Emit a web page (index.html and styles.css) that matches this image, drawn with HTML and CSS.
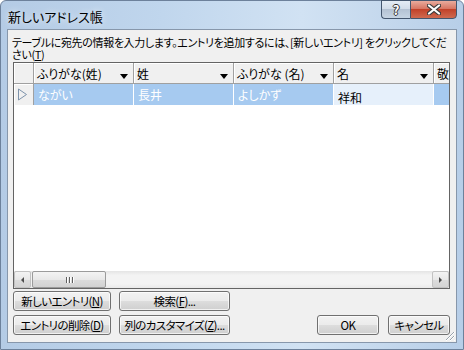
FILE: index.html
```html
<!DOCTYPE html>
<html lang="ja">
<head>
    <meta charset="UTF-8">
    <title>新しいアドレス帳</title>
    <link rel="stylesheet" href="styles.css">
</head>
<body>
    <div class="window">
        <!-- Title bar -->
        <div class="titlebar">
            <span class="title">新しいアドレス帳</span>
            <div class="caption-buttons">
                <div class="cap-btn help">?</div>
                <div class="cap-btn close">
                    <svg width="14" height="11" viewBox="0 0 14 11">
                        <path d="M2 1.5 L12 9.5 M12 1.5 L2 9.5" stroke="#3b3b3b" stroke-width="4.2" stroke-linecap="round"/>
                        <path d="M2 1.5 L12 9.5 M12 1.5 L2 9.5" stroke="#ffffff" stroke-width="2.2" stroke-linecap="round"/>
                    </svg>
                </div>
            </div>
        </div>

        <div class="client">
            <div class="prompt">
                <span>テーブルに宛先の情報を入力します。エントリを追加するには、[新しいエントリ] をクリックしてくだ</span>
                <span>さい(<u>T</u>)</span>
            </div>

            <!-- Address grid -->
            <div class="grid">
                <div class="grid-view">
                    <div class="grid-row grid-head">
                        <div class="row-head"></div>
                        <div class="col-head"><span>ふりがな(姓)</span><i class="drop"></i></div>
                        <div class="col-head"><span>姓</span><i class="drop"></i></div>
                        <div class="col-head"><span>ふりがな (名)</span><i class="drop"></i></div>
                        <div class="col-head"><span>名</span><i class="drop"></i></div>
                        <div class="col-head"><span>敬称</span><i class="drop"></i></div>
                    </div>
                    <div class="grid-row grid-data">
                        <div class="row-head">
                            <svg width="11" height="13" viewBox="0 0 11 13">
                                <path d="M1.5 1 L9.5 6.5 L1.5 12 Z" fill="none" stroke="#7d93ab" stroke-width="1"/>
                            </svg>
                        </div>
                        <div class="cell sel">ながい</div>
                        <div class="cell sel">長井</div>
                        <div class="cell sel">よしかず</div>
                        <div class="cell current">祥和</div>
                        <div class="cell sel"></div>
                    </div>
                </div>
                <div class="hscroll">
                    <div class="sb-btn"><i class="arrow-left"></i></div>
                    <div class="sb-thumb"><i></i><i></i><i></i></div>
                    <div class="sb-track"></div>
                    <div class="sb-btn"><i class="arrow-right"></i></div>
                </div>
            </div>

            <!-- Buttons -->
            <div class="actions">
                <div class="left-buttons">
                    <div class="btn">新しいエントリ(<u>N</u>)</div>
                    <div class="btn">検索(<u>F</u>)...</div>
                    <div class="btn">エントリの削除(<u>D</u>)</div>
                    <div class="btn">列のカスタマイズ(<u>Z</u>)...</div>
                </div>
                <div class="right-buttons">
                    <div class="btn">OK</div>
                    <div class="btn">キャンセル</div>
                </div>
            </div>

            <svg class="grip" width="12" height="12" viewBox="0 0 12 12">
                <path d="M11 2 L2 11 M11 6 L6 11 M11 10 L10 11" stroke="#ffffff" stroke-width="1"/>
                <path d="M10 2 L2 10 M10 6 L6 10" stroke="#9aa3ad" stroke-width="1"/>
            </svg>
        </div>
    </div>
</body>
</html>
```

FILE: styles.css
```css
* {
    margin: 0;
    padding: 0;
    box-sizing: border-box;
}

body {
    width: 464px;
    height: 350px;
    overflow: hidden;
    font-family: "Noto Sans CJK JP", sans-serif;
    font-size: 12px;
    font-feature-settings: "palt";
    color: #000;
    background: #fff;
}

u {
    text-decoration: underline;
    text-underline-offset: 1px;
}

.window {
    width: 464px;
    height: 350px;
    display: flex;
    flex-direction: column;
    border: 1px solid #6d819b;
    border-radius: 6px 6px 0 0;
    background: linear-gradient(to right, #b4cbe5 0%, #c0d6ed 35%, #d1e2f3 65%, #c7daee 80%, #b7cee8 100%);
}

/* Title bar */
.titlebar {
    height: 28px;
    display: flex;
    align-items: center;
    padding: 0 6px 0 7px;
}

.title {
    flex: 1;
    font-size: 13px;
    padding-top: 3px;
    text-shadow: 0 0 6px rgba(255, 255, 255, 0.9);
}

.caption-buttons {
    align-self: flex-start;
    margin-top: -1px;
    display: flex;
}

.cap-btn {
    height: 19px;
    display: flex;
    align-items: center;
    justify-content: center;
    border: 1px solid #44566e;
}

.help {
    width: 29px;
    border-right: none;
    border-radius: 0 0 0 4px;
    background: linear-gradient(#e4ecf5 0%, #d3dde9 45%, #b4c2d3 50%, #c6d4e3 100%);
    color: #fff;
    font-weight: bold;
    font-size: 13px;
    text-shadow: 1px 0 #333, -1px 0 #333, 0 1px #333, 0 -1px #333;
}

.close {
    width: 47px;
    border-radius: 0 0 4px 0;
    background: linear-gradient(#e9ab9d 0%, #d77663 45%, #c2422a 50%, #cf6a50 100%);
}

/* Client area */
.client {
    position: relative;
    flex: 1;
    margin: 0 6px 6px 6px;
    border: 1px solid #8797ab;
    background: #f0f0f0;
    display: flex;
    flex-direction: column;
    padding: 6px 6px 7px 5px;
}

.prompt {
    margin-left: -1px;
    font-size: 11px;
    letter-spacing: -0.35px;
    white-space: nowrap;
}

.prompt span {
    display: block;
    height: 12px;
    line-height: 12px;
}

/* Grid */
.grid {
    flex: 1;
    margin-top: 2px;
    border: 1px solid #646464;
    background: #fff;
    display: flex;
    flex-direction: column;
}

.grid-view {
    flex: 1;
    overflow: hidden;
}

.grid-row {
    display: flex;
    height: 21px;
    white-space: nowrap;
}

.grid-head {
    border-bottom: 1px solid #a0a0a0;
}

.row-head {
    flex: none;
    width: 20px;
    background: #f0f0f0;
    border-right: 1px solid #a0a0a0;
    box-shadow: inset 1px 1px 0 #fff;
    display: flex;
    align-items: center;
    padding-left: 3px;
}

.col-head {
    flex: none;
    width: 100px;
    display: flex;
    align-items: center;
    padding-left: 3px;
    background: #f0f0f0;
    border-right: 1px solid #a0a0a0;
    box-shadow: inset 1px 1px 0 #fff;
}

.col-head span {
    flex: 1;
}

.drop {
    width: 0;
    height: 0;
    margin: 6px 5px 0 0;
    border-left: 4.5px solid transparent;
    border-right: 4.5px solid transparent;
    border-top: 5px solid #000;
}

.cell {
    flex: none;
    width: 100px;
    padding-left: 4px;
    display: flex;
    align-items: center;
    border-right: 1px solid #fff;
}

.sel {
    background: #a6caf0;
    color: #fff;
}

.current {
    background: #e6f0fb;
    padding-top: 5px;
}

/* Horizontal scrollbar */
.hscroll {
    height: 17px;
    display: flex;
    background: linear-gradient(#e4e4e4, #f3f3f3 25%, #f3f3f3 75%, #e9e9e9);
}

.sb-btn {
    width: 17px;
    display: flex;
    align-items: center;
    justify-content: center;
    border: 1px solid #c2c2c2;
    border-radius: 2px;
    background: linear-gradient(#f3f3f3 0%, #e8e8e8 50%, #dcdcdc 51%, #d4d4d4 100%);
}

.arrow-left {
    border-top: 3px solid transparent;
    border-bottom: 3px solid transparent;
    border-right: 3px solid #4d4d4d;
}

.arrow-right {
    border-top: 3px solid transparent;
    border-bottom: 3px solid transparent;
    border-left: 3px solid #4d4d4d;
}

.sb-thumb {
    width: 74px;
    margin-left: 1px;
    display: flex;
    align-items: center;
    justify-content: center;
    gap: 2px;
    border: 1px solid #9b9b9b;
    border-radius: 2px;
    background: linear-gradient(#f3f3f3 0%, #e8e8e8 50%, #dcdcdc 51%, #d2d2d2 100%);
}

.sb-thumb i {
    width: 1px;
    height: 6px;
    background: #5f5f5f;
    box-shadow: 1px 0 0 #fff;
}

.sb-track {
    flex: 1;
}

/* Buttons */
.actions {
    margin-top: 2px;
    display: flex;
    justify-content: space-between;
    align-items: flex-end;
}

.left-buttons {
    display: grid;
    grid-template-columns: 98px 111px;
    column-gap: 8px;
    row-gap: 4px;
}

.right-buttons {
    display: flex;
    gap: 9px;
}

.right-buttons .btn {
    width: 62px;
}

.btn {
    height: 20px;
    display: flex;
    align-items: center;
    justify-content: center;
    white-space: nowrap;
    font-size: 11.5px;
    letter-spacing: -0.6px;
    border: 1px solid #707070;
    border-radius: 3px;
    background: linear-gradient(#f2f2f2 0%, #ebebeb 50%, #dddddd 51%, #cfcfcf 100%);
    box-shadow: inset 0 0 0 1px rgba(255, 255, 255, 0.7);
}

.grip {
    position: absolute;
    right: 0;
    bottom: 0;
}
```
